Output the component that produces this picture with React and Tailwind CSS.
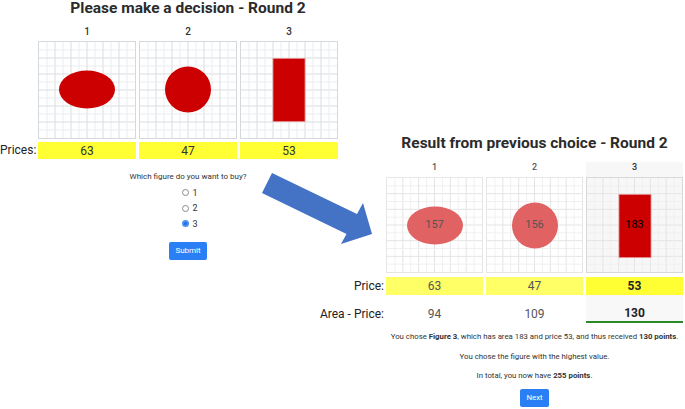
import React from "react";

const RED = "#cc0000";

const Grid = ({ w, h, light }) => {
  const lines = [];
  for (let i = 1; i < 12; i++) {
    const x = (i * w) / 12;
    const y = (i * h) / 12;
    const c = i % 2 === 0 ? (light ? "#e4e4e4" : "#d9dcdf") : light ? "#f0f0f0" : "#eaecee";
    lines.push(<line key={"v" + i} x1={x} y1={0} x2={x} y2={h} stroke={c} strokeWidth="1" />);
    lines.push(<line key={"h" + i} x1={0} y1={y} x2={w} y2={y} stroke={c} strokeWidth="1" />);
  }
  return <g>{lines}</g>;
};

const Panel = ({ w, h, shape, label, faded, bg }) => {
  const fill = faded ? "#e06262" : RED;
  return (
    <div className={"relative border " + (faded ? "border-[#e6e6e6] " : "border-[#d6d9dc] ") + bg} style={{ width: w, height: h }}>
      <svg width={w - 2} height={h - 2} className="block">
        <Grid w={w - 2} h={h - 2} light={faded || label} />
        {shape === "ellipse" && <ellipse cx={48} cy={47.5} rx={28} ry={19} fill={fill} />}
        {shape === "circle" && <circle cx={48} cy={47.5} r={23} fill={fill} />}
        {shape === "rect" && <rect x={32} y={16.5} width={32} height={63} fill={RED} stroke="#e28c8c" strokeWidth="0.8" />}
      </svg>
      {label && (
        <div className={"absolute inset-0 flex items-center justify-center text-[11px] " + (faded ? "text-[#555]" : "text-black")}>
          {label}
        </div>
      )}
    </div>
  );
};

const Radio = ({ checked, n }) => (
  <div className="flex h-[15.6px] items-center gap-[3px]">
    {checked ? (
      <span className="flex h-[7px] w-[7px] items-center justify-center rounded-full bg-[#4d8ff0]">
        <span className="h-[3px] w-[3px] rounded-full bg-[#1a6fe6]" />
      </span>
    ) : (
      <span className="h-[7px] w-[7px] rounded-full border border-[#8a8a8a] bg-white" />
    )}
    <span className="text-[9px] leading-[10px] text-[#333]">{n}</span>
  </div>
);

export default function App() {
  return (
    <div className="relative flex h-[409px] w-[685px] overflow-hidden bg-white font-['Roboto',sans-serif] text-[#333]">
      {/* left: decision */}
      <div className="w-[342px] shrink-0">
        <div className="ml-[38px] w-[300px]">
          <h1 className="text-center text-[15.5px] font-bold leading-[16px] text-[#2b2b2b]">Please make a decision - Round 2</h1>
          <div className="mt-[10px] grid grid-cols-3 gap-[3px] text-center text-[10px] font-medium leading-[12px]">
            <div>1</div>
            <div>2</div>
            <div>3</div>
          </div>
          <div className="mt-[3px] flex gap-[3px]">
            <Panel w={98} h={98} shape="ellipse" />
            <Panel w={98} h={98} shape="circle" />
            <Panel w={98} h={98} shape="rect" />
          </div>
        </div>
        <div className="mt-[3px] flex items-center">
          <div className="w-[38px] text-[12px] leading-[17px] text-[#222]">Prices:</div>
          <div className="flex gap-[3px]">
            {[63, 47, 53].map((p) => (
              <div key={p} className="flex h-[17px] w-[98px] items-center justify-center bg-[#ffff33] text-[12px] text-[#333]">
                {p}
              </div>
            ))}
          </div>
        </div>
        <div className="ml-[38px] flex w-[300px] flex-col items-center">
          <p className="mt-[13px] text-[8px] leading-[10px] text-[#333]">Which figure do you want to buy?</p>
          <div className="mt-[3px] flex flex-col pl-[4px]">
            <Radio n="1" />
            <Radio n="2" />
            <Radio n="3" checked />
          </div>
          <button className="mt-[10px] flex h-[18px] w-[38px] items-center justify-center rounded-[2px] bg-[#2a7ff5] text-[8px] text-white">
            Submit
          </button>
        </div>
      </div>

      {/* right: result */}
      <div className="mt-[135px] w-[343px]">
        <div className="ml-[44px] w-[297px]">
          <h2 className="whitespace-nowrap text-center text-[15.5px] font-bold leading-[16px] text-[#2b2b2b]">
            Result from previous choice - Round 2
          </h2>
          <div className="mt-[11px] grid grid-cols-3 gap-[3px] text-center text-[9px] font-medium leading-[11px]">
            <div className="h-[15px] text-[#555]">1</div>
            <div className="h-[15px] text-[#555]">2</div>
            <div className="h-[15px] bg-[#f7f7f7]">3</div>
          </div>
          <div className="flex gap-[3px]">
            <Panel w={97} h={96} shape="ellipse" faded label="157" bg="bg-white" />
            <Panel w={97} h={96} shape="circle" faded label="156" bg="bg-white" />
            <Panel w={97} h={96} shape="rect" label="183" bg="bg-[#f7f7f7]" />
          </div>
        </div>
        <div className="mt-[4px] flex">
          <div className="flex w-[44px] items-center justify-end whitespace-nowrap pr-[2px] text-[12px] text-[#222]">Price:</div>
          <div className="flex gap-[3px]">
            <div className="flex h-[18px] w-[97px] items-center justify-center bg-[#ffff66] text-[12px] text-[#555]">63</div>
            <div className="flex h-[18px] w-[97px] items-center justify-center bg-[#ffff66] text-[12px] text-[#555]">47</div>
            <div className="flex h-[18px] w-[97px] items-center justify-center bg-[#ffff33] text-[12px] font-bold text-[#222]">53</div>
          </div>
        </div>
        <div className="flex">
          <div className="flex h-[28px] w-[44px] items-end justify-end whitespace-nowrap pb-[2px] pr-[2px] text-[12px] leading-[14px] text-[#222]">
            Area - Price:
          </div>
          <div className="flex gap-[3px]">
            <div className="flex h-[28px] w-[97px] items-end justify-center pb-[2px] text-[12px] leading-[14px] text-[#555]">94</div>
            <div className="flex h-[28px] w-[97px] items-end justify-center pb-[2px] text-[12px] leading-[14px] text-[#555]">109</div>
            <div className="flex h-[28px] w-[97px] items-end justify-center border-b-2 border-[#2a8a2a] bg-[#f8f8f8] pb-[1px] text-[12px] font-bold leading-[14px] text-[#222]">
              130
            </div>
          </div>
        </div>
        <div className="ml-[44px] flex w-[297px] flex-col items-center text-[7.8px] leading-[10px] text-[#333]">
          <p className="mt-[9px] whitespace-nowrap">
            You chose <b>Figure 3</b>, which has area 183 and price 53, and thus received <b>130 points</b>.
          </p>
          <p className="mt-[10px]">You chose the figure with the highest value.</p>
          <p className="mt-[9px]">
            In total, you now have <b>255 points</b>.
          </p>
          <button className="mt-[8px] flex h-[18px] w-[29px] items-center justify-center rounded-[2px] bg-[#2a7ff5] text-[7.8px] text-white">
            Next
          </button>
        </div>
      </div>

      {/* arrow */}
      <svg className="pointer-events-none absolute left-0 top-0" width="685" height="409">
        <polygon points="272,173 357,214 363,203 372,234 341,244 346.5,234 262,193" fill="#4472c4" />
      </svg>
    </div>
  );
}
